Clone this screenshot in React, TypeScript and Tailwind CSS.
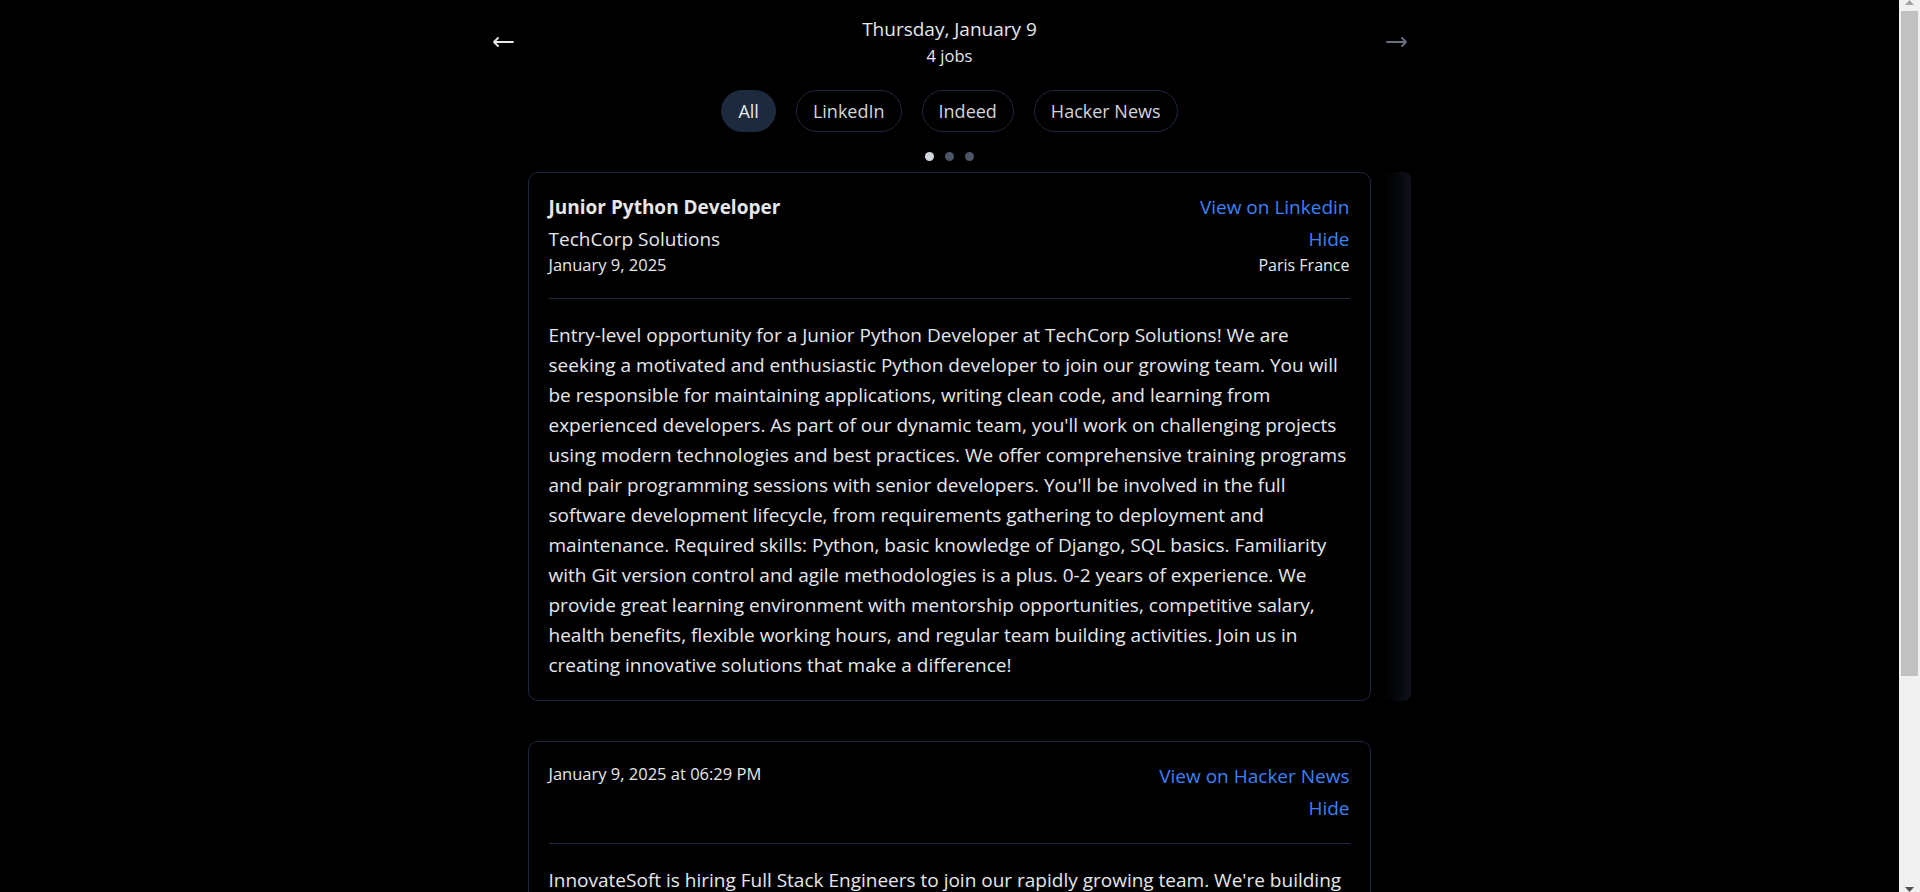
import { useState } from 'react'

type Job = {
  id: number
  title?: string
  company?: string
  date: string
  location?: string
  source: string
  lines: string[]
}

const jobs: Job[] = [
  {
    id: 1,
    title: 'Junior Python Developer',
    company: 'TechCorp Solutions',
    date: 'January 9, 2025',
    location: 'Paris France',
    source: 'Linkedin',
    lines: [
      'Entry-level opportunity for a Junior Python Developer at TechCorp Solutions! We are',
      'seeking a motivated and enthusiastic Python developer to join our growing team. You will',
      'be responsible for maintaining applications, writing clean code, and learning from',
      "experienced developers. As part of our dynamic team, you'll work on challenging projects",
      'using modern technologies and best practices. We offer comprehensive training programs',
      "and pair programming sessions with senior developers. You'll be involved in the full",
      'software development lifecycle, from requirements gathering to deployment and',
      'maintenance. Required skills: Python, basic knowledge of Django, SQL basics. Familiarity',
      'with Git version control and agile methodologies is a plus. 0-2 years of experience. We',
      'provide great learning environment with mentorship opportunities, competitive salary,',
      'health benefits, flexible working hours, and regular team building activities. Join us in',
      'creating innovative solutions that make a difference!',
    ],
  },
  {
    id: 2,
    date: 'January 9, 2025 at 06:29 PM',
    source: 'Hacker News',
    lines: [
      "InnovateSoft is hiring Full Stack Engineers to join our rapidly growing team. We're building",
      'the next generation of collaboration tools used by thousands of companies worldwide. You',
      'will work across the entire stack, from designing responsive interfaces in React and',
      'TypeScript to building scalable APIs with Node.js and PostgreSQL. We value ownership,',
      'clear communication and a passion for shipping quality software. Requirements: 3+ years',
      'of professional experience, strong JavaScript fundamentals, experience with cloud',
      'platforms (AWS or GCP) and CI/CD pipelines. Remote-friendly, competitive compensation,',
      'equity package, generous vacation policy and a yearly learning budget. Apply with your',
      'resume and a short note about a project you are proud of.',
    ],
  },
]

const filters = ['All', 'LinkedIn', 'Indeed', 'Hacker News']

function Arrow({ dir, className }: { dir: 'left' | 'right'; className?: string }) {
  return (
    <svg width="22" height="12" viewBox="0 0 22 12" fill="none" stroke="currentColor" strokeWidth="1.8" className={className}>
      {dir === 'left' ? (
        <path d="M2 6H21M6 2 2 6l4 4" strokeLinecap="round" strokeLinejoin="round" />
      ) : (
        <path d="M1 6H20M16 2l4 4-4 4" strokeLinecap="round" strokeLinejoin="round" />
      )}
    </svg>
  )
}

function JobCard({ job }: { job: Job }) {
  return (
    <div className="min-w-0 flex-1 rounded-[10px] border border-slate-800 bg-black p-5">
      <div className="flex items-start justify-between border-b border-slate-800 pb-[21px]">
        <div>
          {job.title && <div className="mb-1 text-[19px] leading-7 font-bold text-gray-200">{job.title}</div>}
          {job.company && <div className="text-[19px] leading-7 text-gray-200">{job.company}</div>}
          <div className="text-[16.5px] leading-6 text-gray-200">{job.date}</div>
        </div>
        <div className="text-right">
          <a className="mb-1 block text-[19px] leading-7 text-[#3b82f6]">View on {job.source}</a>
          <button className="block w-full text-right text-[19px] leading-7 text-[#3b82f6]">Hide</button>
          {job.location && <div className="text-base leading-6 text-gray-200">{job.location}</div>}
        </div>
      </div>
      <p className="pt-[21px] text-[19px] leading-[30px] text-gray-200">
        {job.lines.map((l, i) => (
          <span key={i} className="block whitespace-nowrap">{l}</span>
        ))}
      </p>
    </div>
  )
}

function Scrollbar() {
  return (
    <div className="flex w-[21px] shrink-0 flex-col items-center bg-[#f1f1f1]">
      <svg width="9" height="5" viewBox="0 0 9 5" className="shrink-0">
        <path d="M4.5 0 9 5H0z" fill="#a3a3a3" />
      </svg>
      <div className="mt-[6px] h-[665px] w-[17px] bg-[#c1c1c1]" />
      <svg width="9" height="5" viewBox="0 0 9 5" className="mt-auto shrink-0">
        <path d="M0 0h9L4.5 5z" fill="#505050" />
      </svg>
    </div>
  )
}

export default function App() {
  const [active, setActive] = useState('All')

  return (
    <div className="flex h-screen bg-black font-['Open_Sans',sans-serif] text-gray-200">
      <main className="flex-1 overflow-hidden">
        <div className="mx-auto w-[922px] pt-[15px] pb-6">
          <div className="flex items-center justify-between">
            <button className="pl-[3px] text-gray-200"><Arrow dir="left" /></button>
            <div className="text-center">
              <div className="text-[19px] leading-7 text-gray-200">Thursday, January 9</div>
              <div className="mt-px text-[16.5px] leading-6 text-gray-200">4 jobs</div>
            </div>
            <button className="pr-[3px] text-gray-500"><Arrow dir="right" /></button>
          </div>

          <div className="mt-[22px] flex justify-center gap-5">
            {filters.map((f) => (
              <button
                key={f}
                onClick={() => setActive(f)}
                className={`h-[42px] rounded-full border border-slate-800 px-4 text-lg ${
                  active === f ? 'bg-slate-800 text-gray-200' : 'text-gray-300'
                }`}
              >
                {f}
              </button>
            ))}
          </div>

          <div className="mt-5 flex justify-center gap-[11px]">
            <span className="size-[9px] rounded-full bg-gray-300" />
            <span className="size-[9px] rounded-full bg-gray-600" />
            <span className="size-[9px] rounded-full bg-gray-600" />
          </div>

          <div className="mt-[11px] flex flex-col gap-10">
            {jobs.map((job, i) => (
              <div key={job.id} className="flex">
                <div className="w-[39px] shrink-0" />
                <JobCard job={job} />
                <div className={`w-10 shrink-0 rounded-r-lg ${i === 0 ? 'bg-gradient-to-r from-black to-[#10141b]' : ''}`} />
              </div>
            ))}
          </div>
        </div>
      </main>
      <Scrollbar />
    </div>
  )
}
